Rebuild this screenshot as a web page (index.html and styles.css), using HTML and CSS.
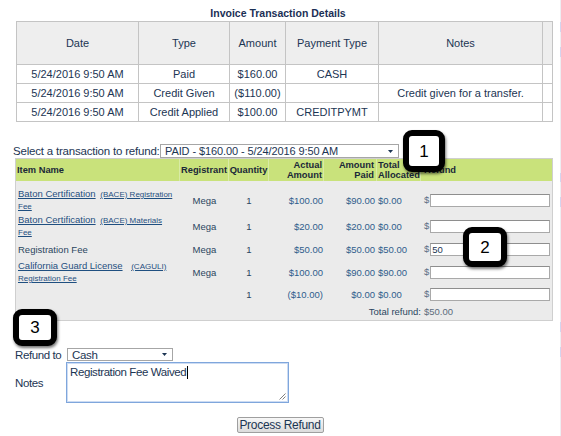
FILE: index.html
```html
<!DOCTYPE html>
<html>
<head>
<meta charset="utf-8">
<title>Invoice Transaction Details</title>
<link rel="stylesheet" href="styles.css">
</head>
<body>
<div class="shell">
  <div class="page">
    <div class="title">Invoice Transaction Details</div>
    <table class="tx">
      <thead>
        <tr>
          <th class="c1">Date</th>
          <th class="c2">Type</th>
          <th class="c3">Amount</th>
          <th class="c4">Payment Type</th>
          <th class="c5">Notes</th>
          <th class="c6"></th>
        </tr>
      </thead>
      <tbody>
        <tr><td>5/24/2016 9:50 AM</td><td>Paid</td><td>$160.00</td><td>CASH</td><td></td><td></td></tr>
        <tr><td>5/24/2016 9:50 AM</td><td>Credit Given</td><td>($110.00)</td><td></td><td>Credit given for a transfer.</td><td></td></tr>
        <tr><td>5/24/2016 9:50 AM</td><td>Credit Applied</td><td>$100.00</td><td>CREDITPYMT</td><td></td><td></td></tr>
      </tbody>
    </table>

    <div class="pick">
      <span class="pick-label">Select a transaction to refund:</span>
      <div class="select sel-tx">
        <span>PAID - $160.00 - 5/24/2016 9:50 AM</span>
        <svg class="arrow" width="5" height="3" viewBox="0 0 5 3"><polygon points="0,0 5,0 2.5,3"/></svg>
      </div>
    </div>

    <div class="refund-box">
      <table class="items">
        <thead>
          <tr>
            <th class="ci">Item Name</th>
            <th class="cr">Registrant</th>
            <th class="cq">Quantity</th>
            <th class="ca">Actual<br>Amount</th>
            <th class="cp">Amount<br>Paid</th>
            <th class="ct">Total<br>Allocated</th>
            <th class="cf">Refund</th>
          </tr>
        </thead>
        <tbody>
          <tr class="sp"><td colspan="7"></td></tr>
          <tr class="r1">
            <td class="ci"><a href="#" class="big">Baton Certification</a> <a href="#" class="sm">(BACE) Registration</a><br><a href="#" class="sm first">Fee</a></td>
            <td class="cr">Mega</td><td class="cq">1</td>
            <td class="ca amt">$100.00</td><td class="cp amt">$90.00</td><td class="ct amt">$0.00</td>
            <td class="cf"><span class="dol">$</span><input class="inp" type="text" value=""></td>
          </tr>
          <tr class="r2">
            <td class="ci"><a href="#" class="big">Baton Certification</a> <a href="#" class="sm">(BACE) Materials</a><br><a href="#" class="sm first">Fee</a></td>
            <td class="cr">Mega</td><td class="cq">1</td>
            <td class="ca amt">$20.00</td><td class="cp amt">$20.00</td><td class="ct amt">$0.00</td>
            <td class="cf"><span class="dol">$</span><input class="inp" type="text" value=""></td>
          </tr>
          <tr class="r3">
            <td class="ci plain">Registration Fee</td>
            <td class="cr">Mega</td><td class="cq">1</td>
            <td class="ca amt">$50.00</td><td class="cp amt">$50.00</td><td class="ct amt">$50.00</td>
            <td class="cf"><span class="dol">$</span><input class="inp" type="text" value="50"></td>
          </tr>
          <tr class="r4">
            <td class="ci"><a href="#" class="big">California Guard License</a> <a href="#" class="sm gap">(CAGULI)</a><br><a href="#" class="sm first">Registration Fee</a></td>
            <td class="cr">Mega</td><td class="cq">1</td>
            <td class="ca amt">$100.00</td><td class="cp amt">$90.00</td><td class="ct amt">$90.00</td>
            <td class="cf"><span class="dol">$</span><input class="inp" type="text" value=""></td>
          </tr>
          <tr class="r5">
            <td class="ci"></td>
            <td class="cr"></td><td class="cq">1</td>
            <td class="ca amt">($10.00)</td><td class="cp amt">$0.00</td><td class="ct amt">$0.00</td>
            <td class="cf"><span class="dol">$</span><input class="inp" type="text" value=""></td>
          </tr>
          <tr class="rt">
            <td class="tot-label" colspan="6">Total refund:</td>
            <td class="tot-val">$50.00</td>
          </tr>
        </tbody>
      </table>
    </div>

    <div class="form">
      <div class="lbl">Refund to</div>
      <div class="select sel-to">
        <span>Cash</span>
        <svg class="arrow" width="5" height="3" viewBox="0 0 5 3"><polygon points="0,0 5,0 2.5,3"/></svg>
      </div>
      <div class="lbl">Notes</div>
      <div class="notes">Registration Fee Waived<span class="caret"></span>
        <svg class="grip" width="8" height="8" viewBox="0 0 8 8"><path d="M7.5 1.5 L1.5 7.5 M7.5 4.5 L4.5 7.5" stroke="#808080" stroke-width="1" fill="none"/></svg>
      </div>
    </div>

    <div class="actions"><button class="btn" type="button">Process Refund</button></div>

    <div class="callout co1">1</div>
    <div class="callout co2">2</div>
    <div class="callout co3">3</div>
  </div>
  <div class="edge"></div>
</div>
</body>
</html>
```

FILE: styles.css
```css
* { box-sizing: border-box; }
html, body { margin: 0; padding: 0; background: #fff; }
body { font-family: "Liberation Sans", Arial, sans-serif; color: #1c3553; }

.shell { display: flex; width: 561px; height: 436px; overflow: hidden; }
.page { position: relative; width: 560px; flex: none; }
.edge {
  width: 1px; flex: none;
  background: linear-gradient(to bottom,
    #eeeef2 0 22px, #d4d4ee 22px 32px, #eeeef2 32px 47px, #d4d4ee 47px 57px,
    #eeeef2 57px 173px, #d4d4ee 173px 182px, #eeeef2 182px 197px, #d4d4ee 197px 207px,
    #eeeef2 207px 322px, #d4d4ee 322px 332px, #eeeef2 332px 347px, #d4d4ee 347px 357px,
    #eeeef2 357px);
}

.title {
  width: 556px; height: 21px; padding-top: 7px;
  font-size: 10.5px; font-weight: bold; line-height: 12px; text-align: center;
  color: #1b2f55;
}

/* transaction table */
.tx {
  margin-left: 16px; width: 537px;
  border-collapse: separate; border-spacing: 0; table-layout: fixed;
  border-top: 1px solid #c4c4c4; border-left: 1px solid #c4c4c4;
}
.tx th, .tx td {
  padding: 0; border-right: 1px solid #c4c4c4; border-bottom: 1px solid #c4c4c4;
  font-size: 11px; font-weight: normal; line-height: 12px; text-align: center;
  vertical-align: middle; white-space: nowrap; overflow: hidden;
}
.tx thead tr { height: 43px; }
.tx th { background: #eeeeee; }
.tx tbody tr { height: 19px; }
.tx .c1 { width: 122px; }
.tx .c2 { width: 91px; }
.tx .c3 { width: 56px; }
.tx .c4 { width: 93px; }
.tx .c5 { width: 164px; }
.tx .c6 { width: 10px; }

/* selector row */
.pick {
  display: flex; align-items: center; height: 14px; margin-top: 22px; padding-left: 13px;
}
.pick-label { width: 147px; font-size: 11.5px; letter-spacing: -0.2px; white-space: nowrap; }
.select {
  display: flex; align-items: center; height: 14px; padding-left: 4px;
  border: 1px solid #a6a6a6; background: #fff; white-space: nowrap;
}
.sel-tx { width: 239px; font-size: 11px; letter-spacing: -0.1px; }
.arrow { margin-left: auto; margin-right: 5px; fill: #1c3553; }

/* refund items */
.refund-box {
  margin-left: 15px; width: 538px;
  border: 1px solid #cfcfcf; background: #ebebeb;
}
.items {
  width: 536px; border-collapse: separate; border-spacing: 0; table-layout: fixed;
}
.items th, .items td { padding: 0; vertical-align: middle; white-space: nowrap; }
.items thead tr { height: 22px; }
.items th {
  background: #c9e27b; border-right: 1px solid #d8eba6;
  font-size: 9.3px; font-weight: bold; line-height: 10px; color: #1a2838;
}
.items th.cf { border-right: 0; }
.items .ci { width: 164px; text-align: left; padding-left: 2px; }
.items .cr { width: 49px; text-align: center; }
.items .cq { width: 40px; text-align: center; }
.items .ca { width: 55px; text-align: right; padding-right: 1px; }
.items .cp { width: 53px; text-align: right; padding-right: 2px; }
.items .ct { width: 44px; text-align: left; padding-left: 1px; }
.items .cf { width: 131px; text-align: left; padding-left: 3px; }
.items th.ci { padding-left: 1px; }

.items td { font-size: 9.5px; line-height: 11px; color: #2a4560; }
.items tr.sp { height: 6px; }
.items tr.r1 { height: 26px; }
.items tr.r2 { height: 26px; }
.items tr.r3 { height: 20px; }
.items tr.r4 { height: 26px; }
.items tr.r5 { height: 18px; }
.items tr.rt { height: 17px; }

.items td.ci { line-height: 11px; }
.items a { color: #1f4f80; text-decoration: underline; }
.items a.big { font-size: 9.5px; }
.items a.sm { font-size: 8px; margin-left: 2px; }
.items a.sm.gap { margin-left: 6px; }
.items a.sm.first { margin-left: 0; }
.items .amt { color: #2f5d8c; }
.items .dol { color: #5c6f86; }
.inp {
  width: 120px; height: 13px; margin: 0 0 0 1px; padding: 0 1px;
  border: 1px solid #a9a9a9; border-top-color: #8e8e8e; background: #fff;
  font-family: "Liberation Sans", Arial, sans-serif; font-size: 9.5px; color: #1c3553;
  vertical-align: middle; outline: none;
}
.tot-label { text-align: right; color: #5b6b7b; }
.items td.tot-val { text-align: left; padding-left: 3px; color: #5b6b7b; }

/* refund form */
.form {
  display: grid; grid-template-columns: 51px 223px; row-gap: 1px; align-items: center;
  margin-top: 27px; padding-left: 15px;
}
.lbl { font-size: 11.5px; letter-spacing: -0.4px; white-space: nowrap; }
.sel-to { width: 106px; height: 13px; margin-left: 1px; font-size: 11.5px; letter-spacing: -0.3px; }
.notes {
  position: relative; height: 41px; padding: 3px 2px 0 3px;
  border: 1px solid #7fa6dc; box-shadow: inset 0 0 0 1px #cddcf3; background: #fff;
  font-size: 11.5px; letter-spacing: -0.4px; line-height: 13px; white-space: nowrap;
}
.caret { display: inline-block; width: 1px; height: 13px; margin-left: 1px; background: #000; vertical-align: top; }
.grip { position: absolute; right: 2px; bottom: 2px; }

.actions { margin-top: 14px; text-align: center; line-height: 0; }
.btn {
  width: 87px; height: 16px; padding: 0;
  border: 1px solid #9f9f9f; border-radius: 2px;
  background: linear-gradient(#f7f7f7, #dcdcdc);
  font-family: "Liberation Sans", Arial, sans-serif; font-size: 12px; letter-spacing: -0.3px;
  line-height: 14px; color: #1c3553;
}

/* numbered callouts */
.callout {
  position: absolute; display: flex; align-items: center; justify-content: center;
  background: #fff; border: 6px solid #000; border-radius: 9px;
  box-shadow: 1px 2px 3px rgba(0,0,0,0.55);
  font-family: "Liberation Sans", Arial, sans-serif; font-size: 17px; line-height: 1; color: #000;
}
.co1 { left: 403px; top: 130px; width: 42px; height: 42px; }
.co2 { left: 463px; top: 227px; width: 44px; height: 40px; }
.co3 { left: 13px; top: 309px; width: 44px; height: 37px; }
```
